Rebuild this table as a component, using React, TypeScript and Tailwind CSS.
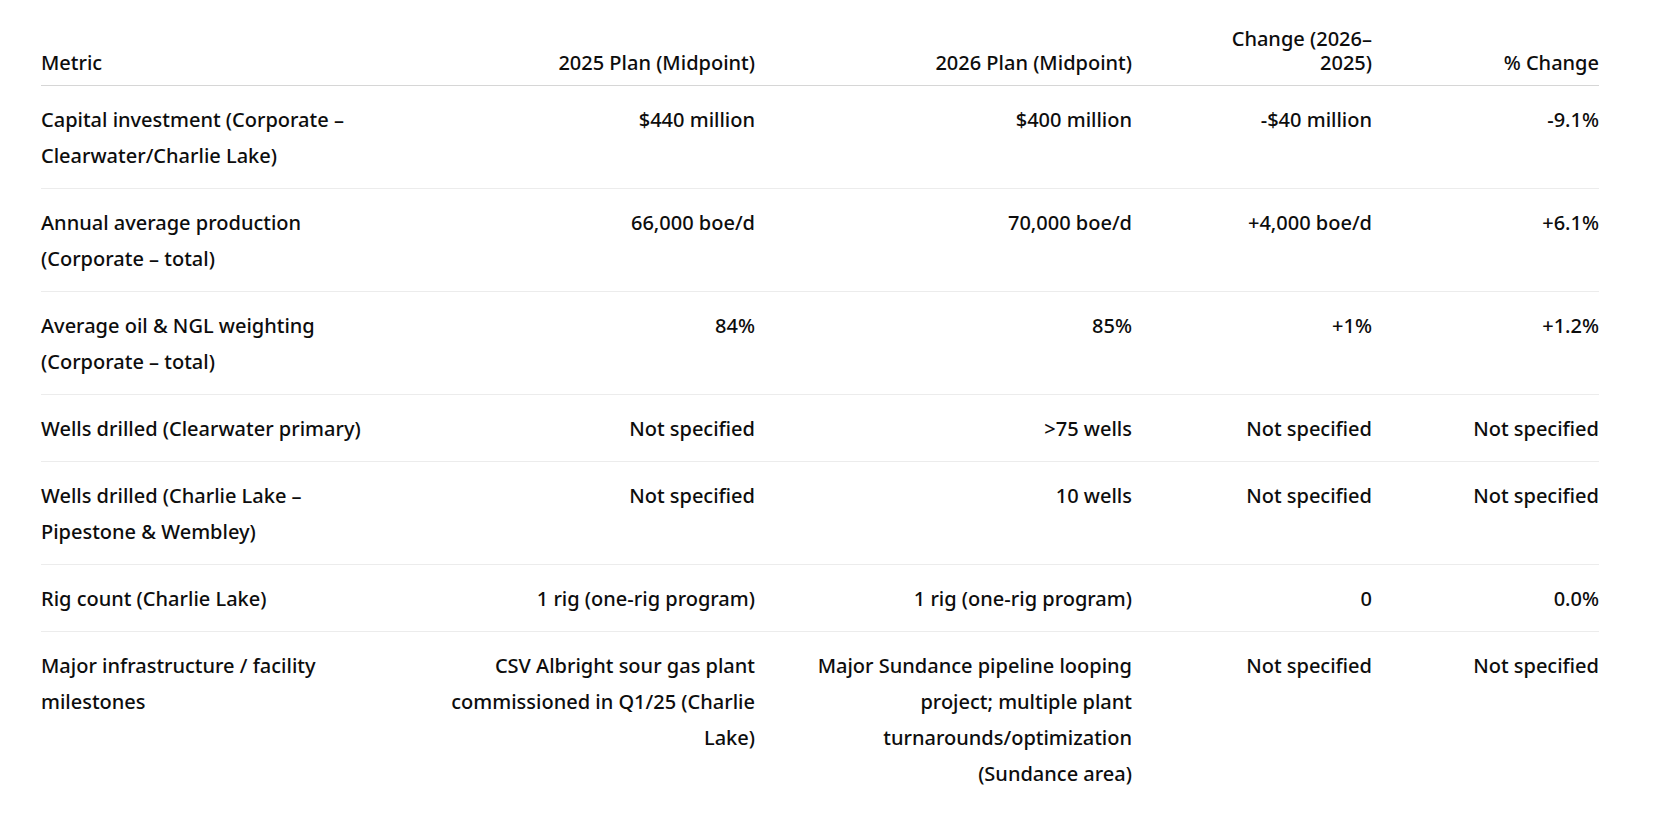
type Row = {
  metric: string;
  plan2025: string;
  plan2026: string;
  change: string;
  pct: string;
};

const rows: Row[] = [
  {
    metric: "Capital investment (Corporate – Clearwater/Charlie Lake)",
    plan2025: "$440 million",
    plan2026: "$400 million",
    change: "-$40 million",
    pct: "-9.1%",
  },
  {
    metric: "Annual average production (Corporate – total)",
    plan2025: "66,000 boe/d",
    plan2026: "70,000 boe/d",
    change: "+4,000 boe/d",
    pct: "+6.1%",
  },
  {
    metric: "Average oil & NGL weighting (Corporate – total)",
    plan2025: "84%",
    plan2026: "85%",
    change: "+1%",
    pct: "+1.2%",
  },
  {
    metric: "Wells drilled (Clearwater primary)",
    plan2025: "Not specified",
    plan2026: ">75 wells",
    change: "Not specified",
    pct: "Not specified",
  },
  {
    metric: "Wells drilled (Charlie Lake – Pipestone & Wembley)",
    plan2025: "Not specified",
    plan2026: "10 wells",
    change: "Not specified",
    pct: "Not specified",
  },
  {
    metric: "Rig count (Charlie Lake)",
    plan2025: "1 rig (one-rig program)",
    plan2026: "1 rig (one-rig program)",
    change: "0",
    pct: "0.0%",
  },
  {
    metric: "Major infrastructure / facility milestones",
    plan2025: "CSV Albright sour gas plant commissioned in Q1/25 (Charlie Lake)",
    plan2026:
      "Major Sundance pipeline looping project; multiple plant turnarounds/optimization (Sundance area)",
    change: "Not specified",
    pct: "Not specified",
  },
];

export default function App() {
  return (
    <div
      className="min-h-screen bg-white pt-[27px] text-[#0d0d0d]"
      style={{ fontFamily: '"Noto Sans", "Open Sans", sans-serif' }}
    >
      <table className="ml-[41px] w-[1558px] table-fixed border-collapse text-[20px] font-medium">
        <colgroup>
          <col className="w-[330px]" />
          <col className="w-[384px]" />
          <col className="w-[377px]" />
          <col className="w-[240px]" />
          <col className="w-[227px]" />
        </colgroup>
        <thead>
          <tr className="border-b border-[#d6d6d6] leading-[24px]">
            <th className="pb-[10px] text-left align-bottom font-medium">
              Metric
            </th>
            <th className="pb-[10px] pl-[52px] text-right align-bottom font-medium">
              2025 Plan (Midpoint)
            </th>
            <th className="pb-[10px] pl-[46px] text-right align-bottom font-medium">
              2026 Plan (Midpoint)
            </th>
            <th className="pb-[10px] pl-[75px] text-right align-bottom font-medium">
              Change (2026–2025)
            </th>
            <th className="pb-[10px] pl-[70px] text-right align-bottom font-medium">
              % Change
            </th>
          </tr>
        </thead>
        <tbody className="leading-[36px]">
          {rows.map((row, i) => (
            <tr
              key={row.metric}
              className={
                i < rows.length - 1 ? "border-b border-[#ececec]" : ""
              }
            >
              <td className="pb-[14px] pt-[16px] text-left align-top">
                {row.metric}
              </td>
              <td className="pb-[14px] pl-[52px] pt-[16px] text-right align-top">
                {row.plan2025}
              </td>
              <td className="pb-[14px] pl-[46px] pt-[16px] text-right align-top">
                {row.plan2026}
              </td>
              <td className="pb-[14px] pl-[75px] pt-[16px] text-right align-top">
                {row.change}
              </td>
              <td className="pb-[14px] pl-[70px] pt-[16px] text-right align-top">
                {row.pct}
              </td>
            </tr>
          ))}
        </tbody>
      </table>
    </div>
  );
}
